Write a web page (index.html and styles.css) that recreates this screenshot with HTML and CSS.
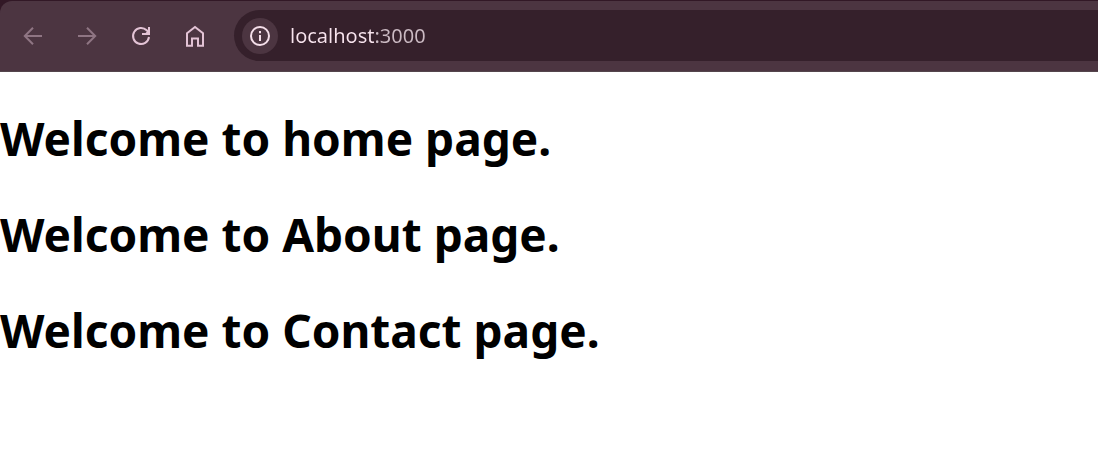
FILE: index.html
```html
<!DOCTYPE html>
<html lang="en">
<head>
<meta charset="utf-8">
<title>localhost:3000</title>
<link rel="stylesheet" href="styles.css">
</head>
<body>
<header class="frame">
  <div class="toolbar">
    <nav class="controls" aria-label="Browser controls">
      <button class="control" type="button" aria-label="Back" disabled>
        <svg class="icon" viewBox="0 0 24 24"><path d="M21 12H4M12 3.800L3.800 12l8.200 8.200"/></svg>
      </button>
      <button class="control" type="button" aria-label="Forward" disabled>
        <svg class="icon" viewBox="0 0 24 24"><path d="M3 12h17M12 3.800l8.200 8.200-8.200 8.200"/></svg>
      </button>
      <button class="control" type="button" aria-label="Reload">
        <svg class="icon" viewBox="0 0 24 24"><path d="M20 13a8 8 0 1 1-2.300-6.700L20 8.600"/><path class="solid" d="M21 3v8h-8V9h3.500L19 6.500V3z"/></svg>
      </button>
      <button class="control" type="button" aria-label="Home">
        <svg class="icon" viewBox="0 0 24 24"><path d="M4 9.300L12 3l8 6.300V21.800h-5V14.500H9v7.300H4z"/></svg>
      </button>
    </nav>
    <div class="omnibox">
      <button class="site-info" type="button" aria-label="View site information">
        <svg class="icon" viewBox="0 0 24 24"><circle cx="12" cy="12" r="9"/><path d="M12 11v6M12 7v2.200"/></svg>
      </button>
      <input class="url" type="text" aria-label="Address" value="localhost:3000" spellcheck="false">
    </div>
  </div>
</header>
<main class="page">
  <h1 class="title">Welcome to home page.</h1>
  <h1 class="title">Welcome to About page.</h1>
  <h1 class="title">Welcome to Contact page.</h1>
</main>
</body>
</html>
```
FILE: styles.css
```css
* {
  box-sizing: border-box;
}

body {
  margin: 0;
  background: #fff;
  color: #000;
  font-family: "Segoe UI", "Noto Sans", sans-serif;
}

.frame {
  padding-top: 1px;
  background: #321826;
}

.toolbar {
  display: flex;
  align-items: center;
  gap: 21px;
  padding: 9px 0 10px 15px;
  border-bottom: 1px solid #54454c;
  border-top-left-radius: 12px;
  background: #4c3541;
}

.controls {
  display: flex;
  gap: 18px;
}

.control,
.site-info {
  display: flex;
  align-items: center;
  justify-content: center;
  flex: none;
  width: 36px;
  height: 36px;
  padding: 0;
  border: 0;
  border-radius: 50%;
  background: none;
  color: #e3c3d5;
}

.control:disabled {
  color: #8f7583;
}

.site-info {
  background: #4c3541;
  color: #f5dfea;
}

.icon {
  width: 24px;
  height: 24px;
  fill: none;
  stroke: currentColor;
  stroke-width: 2;
}

.solid {
  fill: currentColor;
  stroke: none;
}

.omnibox {
  display: flex;
  align-items: center;
  flex: 1;
  gap: 12px;
  min-width: 0;
  height: 51px;
  padding-left: 8px;
  border-radius: 26px 0 0 26px;
  background: #35202b;
}

.url {
  flex: 1;
  min-width: 0;
  padding: 0;
  border: 0;
  outline: 0;
  background: linear-gradient(to right, #f8e4ee 84px, #cbbac3 84px);
  background-clip: text;
  color: transparent;
  font: 20px/30px "Segoe UI", "Noto Sans", sans-serif;
}

.page {
  padding-top: 34px;
}

.title {
  margin: 0 0 32px;
  font-size: 46px;
  font-weight: 700;
  line-height: 64px;
}
```
